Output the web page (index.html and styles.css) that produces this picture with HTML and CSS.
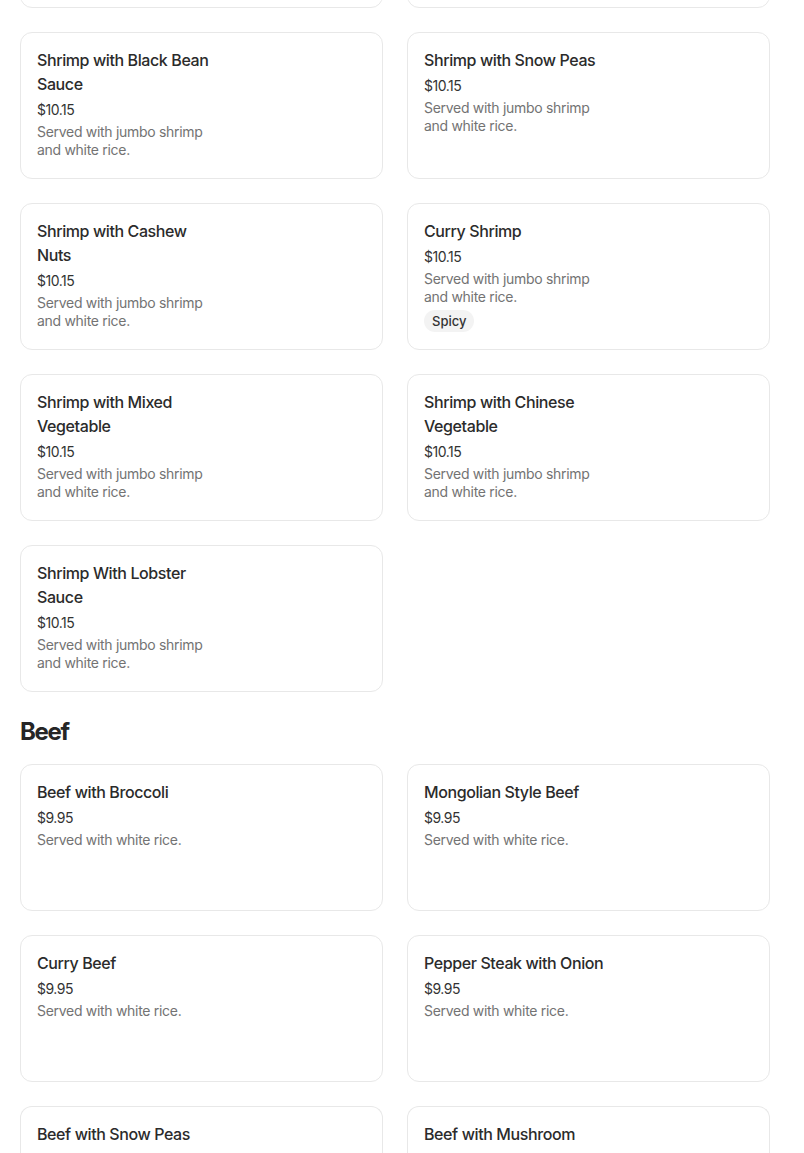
FILE: index.html
```html
<!DOCTYPE html>
<html lang="en">
<head>
<meta charset="utf-8">
<title>Menu</title>
<link rel="stylesheet" href="styles.css">
</head>
<body>
<main class="menu">
  <section class="grid grid-first">
    <div class="card card-edge" aria-hidden="true"></div>
    <div class="card card-edge" aria-hidden="true"></div>
    <div class="card"><div class="info"><h3 class="title">Shrimp with Black Bean Sauce</h3><div class="price">$10.15</div><p class="desc">Served with jumbo shrimp and white rice.</p></div></div>
    <div class="card"><div class="info"><h3 class="title">Shrimp with Snow Peas</h3><div class="price">$10.15</div><p class="desc">Served with jumbo shrimp and white rice.</p></div></div>
    <div class="card"><div class="info"><h3 class="title">Shrimp with Cashew Nuts</h3><div class="price">$10.15</div><p class="desc">Served with jumbo shrimp and white rice.</p></div></div>
    <div class="card"><div class="info"><h3 class="title">Curry Shrimp</h3><div class="price">$10.15</div><p class="desc">Served with jumbo shrimp and white rice.</p><span class="tag">Spicy</span></div></div>
    <div class="card"><div class="info"><h3 class="title">Shrimp with Mixed Vegetable</h3><div class="price">$10.15</div><p class="desc">Served with jumbo shrimp and white rice.</p></div></div>
    <div class="card"><div class="info"><h3 class="title">Shrimp with Chinese Vegetable</h3><div class="price">$10.15</div><p class="desc">Served with jumbo shrimp and white rice.</p></div></div>
    <div class="card"><div class="info"><h3 class="title">Shrimp With Lobster Sauce</h3><div class="price">$10.15</div><p class="desc">Served with jumbo shrimp and white rice.</p></div></div>
  </section>
  <h2 class="section-title">Beef</h2>
  <section class="grid">
    <div class="card"><div class="info"><h3 class="title">Beef with Broccoli</h3><div class="price">$9.95</div><p class="desc">Served with white rice.</p></div></div>
    <div class="card"><div class="info"><h3 class="title">Mongolian Style Beef</h3><div class="price">$9.95</div><p class="desc">Served with white rice.</p></div></div>
    <div class="card"><div class="info"><h3 class="title">Curry Beef</h3><div class="price">$9.95</div><p class="desc">Served with white rice.</p></div></div>
    <div class="card"><div class="info"><h3 class="title">Pepper Steak with Onion</h3><div class="price">$9.95</div><p class="desc">Served with white rice.</p></div></div>
    <div class="card card-last"><div class="info"><h3 class="title">Beef with Snow Peas</h3></div></div>
    <div class="card card-last"><div class="info"><h3 class="title">Beef with Mushroom</h3></div></div>
  </section>
</main>
</body>
</html>
```

FILE: styles.css
```css
* { box-sizing: border-box; }
html, body { margin: 0; padding: 0; background: #fff; }
body {
  font-family: Inter, "Noto Sans", "DejaVu Sans", sans-serif;
  color: #262626;
  height: 1153px;
  overflow: hidden;
}
.menu {
  width: 750px;
  margin-left: 20px;
}
.grid {
  display: grid;
  grid-template-columns: 363px 363px;
  column-gap: 24px;
  row-gap: 24px;
}
.grid-first { margin-top: -139px; }
.card {
  height: 147px;
  border: 1px solid #e8e8e8;
  border-radius: 12px;
  padding: 15px 16px 16px 16px;
  background: #fff;
}
.card-last { height: 60px; border-bottom: none; border-radius: 12px 12px 0 0; }
.info {
  width: 184px;
  display: flex;
  flex-direction: column;
  align-items: flex-start;
}
.title {
  margin: 0;
  font-size: 16px;
  line-height: 24px;
  font-weight: 500;
  letter-spacing: -0.4px;
  color: #2b2b2b;
}
.price {
  margin-top: 4px;
  font-size: 14px;
  line-height: 20px;
  letter-spacing: -0.5px;
  color: #333;
}
.desc {
  margin: 3px 0 0 0;
  font-size: 14px;
  line-height: 18px;
  letter-spacing: -0.3px;
  color: #737373;
}
.tag {
  margin-top: 4px;
  height: 22px;
  line-height: 22px;
  padding: 0 8px;
  border-radius: 11px;
  background: #f3f3f3;
  font-size: 13px;
  font-weight: 500;
  color: #333;
}
.section-title {
  margin: 24px 0 16px 0;
  font-size: 24px;
  line-height: 32px;
  font-weight: 700;
  letter-spacing: -1.3px;
  color: #262626;
}
```
